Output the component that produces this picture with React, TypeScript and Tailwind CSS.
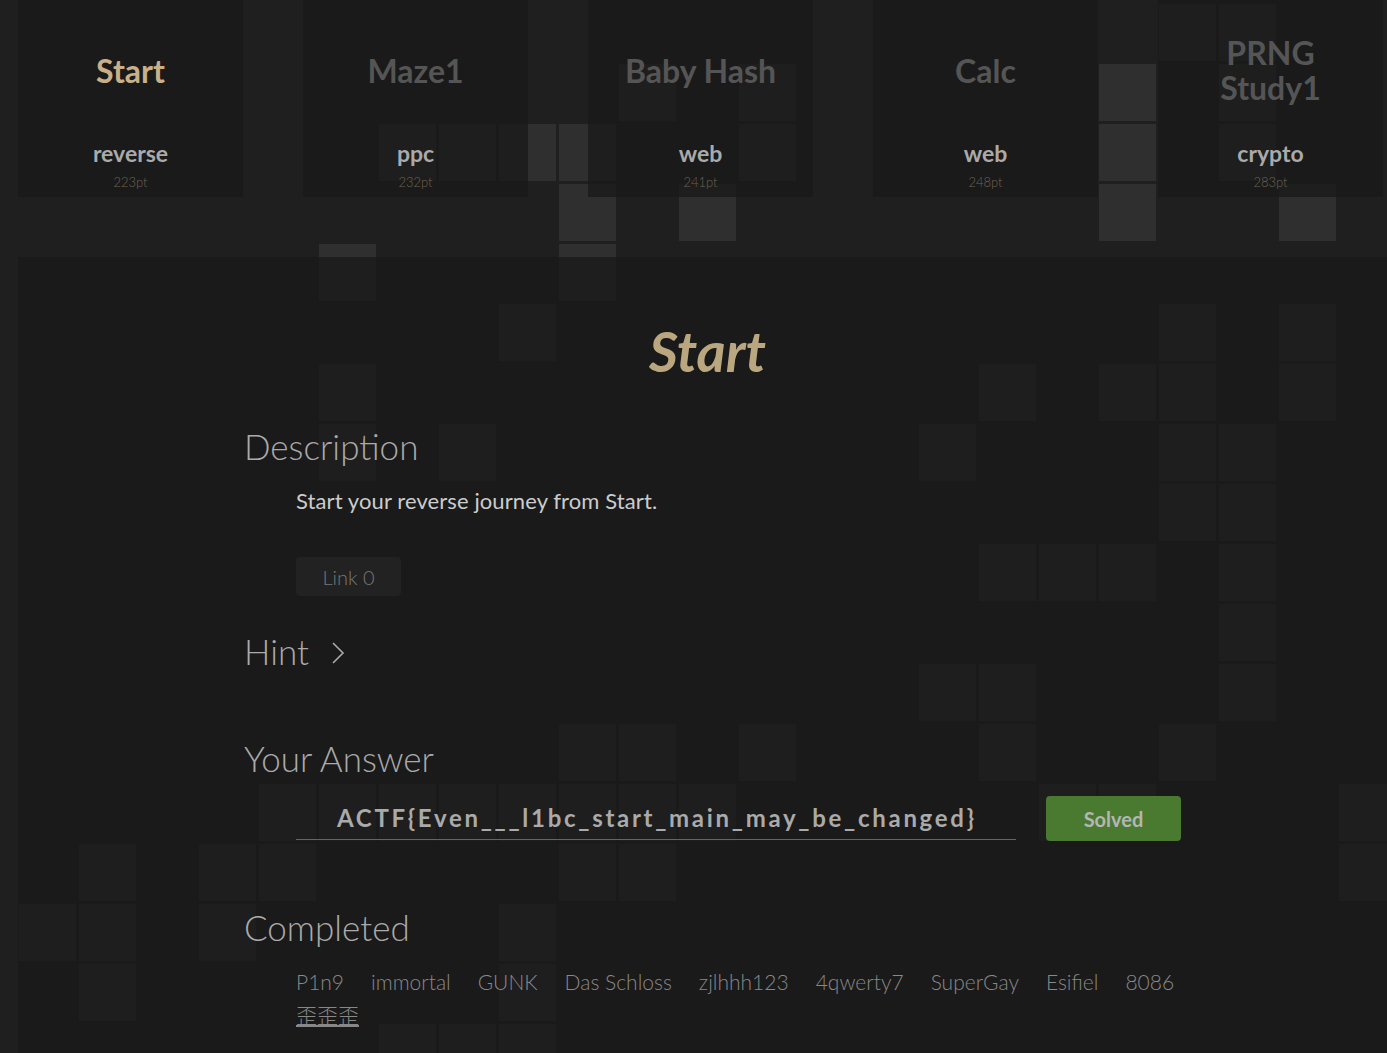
import React from "react";

const BRIGHT = new Set<string>([
  "8,2", "9,2", "9,3", "11,3", "5,4", "9,4", "18,1", "18,2", "18,3", "21,3",
  "6,2", "7,2", "10,1", "12,1", "12,2", "19,0", "20,0", "20,1", "20,2",
  "8,5", "19,5", "21,5", "5,6", "16,6", "18,6", "19,6", "21,6",
  "5,7", "7,7", "15,7", "19,7", "20,7", "19,8", "20,8",
  "16,9", "17,9", "18,9", "20,9", "20,10", "15,11", "16,11", "20,11",
  "9,12", "10,12", "12,12", "16,12", "19,12",
  "4,13", "5,13", "6,13", "7,13", "8,13", "9,13", "10,13", "11,13", "17,13", "18,13", "22,13",
  "1,14", "3,14", "4,14", "9,14", "10,14", "22,14",
  "0,15", "1,15", "3,15", "8,15", "1,16", "8,16", "6,17", "7,17", "8,17",
]);

const cards = [
  { title: "Start", cat: "reverse", pt: "223pt", active: true },
  { title: "Maze1", cat: "ppc", pt: "232pt" },
  { title: "Baby Hash", cat: "web", pt: "241pt" },
  { title: "Calc", cat: "web", pt: "248pt" },
  { title: "PRNG Study1", cat: "crypto", pt: "283pt" },
];

const names = ["P1n9", "immortal", "GUNK", "Das Schloss", "zjlhhh123", "4qwerty7", "SuperGay", "Esifiel", "8086"];

function Background() {
  const cells = [];
  for (let j = 0; j < 18; j++) {
    for (let i = 0; i < 23; i++) {
      const on = BRIGHT.has(`${i},${j}`);
      cells.push(<div key={`${i}-${j}`} className={on ? "bg-[#2f2f2f]" : ""} />);
    }
  }
  return (
    <div className="absolute left-[19px] top-[4px] grid grid-cols-[repeat(23,57px)] auto-rows-[57px] gap-[3px]">
      {cells}
    </div>
  );
}

export default function App() {
  return (
    <div className="relative min-h-screen overflow-hidden bg-[#1f1f1f] font-['Lato','Noto_Sans_CJK_SC',sans-serif]">
      <Background />
      <div className="relative">
        <div className="flex gap-[60px] pl-[18px]">
          {cards.map((c) => (
            <div key={c.title} className="flex h-[197px] w-[225px] flex-col items-center bg-[rgba(24,24,24,0.73)] px-5">
              <div className="flex h-[140px] items-center justify-center text-center">
                <div className={`text-[32px] font-bold leading-[35px] ${c.active ? "text-[#c8b089]" : "text-[#555555]"}`}>
                  {c.title}
                </div>
              </div>
              <div className="h-[26px] text-[23px] font-bold leading-[26px] text-[#aaaaaa]">{c.cat}</div>
              <div className="mt-[8px] h-[16px] text-[13px] font-light leading-[16px] text-[#6e634f]">{c.pt}</div>
            </div>
          ))}
        </div>

        <div className="ml-[18px] mt-[60px] bg-[rgba(24,24,24,0.73)] pb-[60px] pl-[226px]">
          <div className="pl-[10px] pr-[226px] pt-[66px] text-center text-[56px] font-bold italic leading-none text-[#bba77f]">
            Start
          </div>

          <div className="mt-[50px] text-[35px] font-light leading-none text-[#aaaaaa]">Description</div>
          <div className="ml-[52px] mt-[26px] text-[22px] leading-none tracking-[0.1px] text-[#cccccc]">
            Start your reverse journey from Start.
          </div>
          <div className="ml-[52px] mt-[45px] flex h-[39px] w-[105px] items-center justify-center rounded-sm bg-[#222222] text-[20px] font-light text-[#777777]">
            Link 0
          </div>

          <div className="mt-[38px] flex items-center text-[35px] font-light leading-none text-[#aaaaaa]">
            <span>Hint</span>
            <svg className="ml-[21px] mt-[2px]" width="16" height="24" viewBox="0 0 16 24" fill="none">
              <polyline points="3,2 13,12 3,22" stroke="#aaaaaa" strokeWidth="1.6" />
            </svg>
          </div>

          <div className="mt-[72px] text-[35px] font-light leading-none text-[#aaaaaa]">Your Answer</div>
          <div className="ml-[52px] mt-[20px] flex items-start">
            <div className="flex h-[44px] w-[720px] items-end border-b border-[#4e7a35] pb-[9px] pl-[41px] text-[24px] font-bold leading-none tracking-[2.7px] text-[#aaaaaa]">
              ACTF{"{"}Even___l1bc_start_main_may_be_changed{"}"}
            </div>
            <div className="ml-[30px] flex h-[45px] w-[135px] items-center justify-center rounded-sm bg-[#4a7a2f] text-[20px] font-bold text-[#b5b5b5]">
              Solved
            </div>
          </div>

          <div className="mt-[69px] text-[35px] font-light leading-none text-[#aaaaaa]">Completed</div>
          <div className="ml-[52px] mt-[20px] text-[21px] font-light leading-[33px] text-[#888888]">
            <div className="flex gap-x-[27px]">
              {names.map((n) => (
                <span key={n}>{n}</span>
              ))}
            </div>
            <div>
              <span className="underline underline-offset-2">歪歪歪</span>
            </div>
          </div>
        </div>
      </div>
    </div>
  );
}
